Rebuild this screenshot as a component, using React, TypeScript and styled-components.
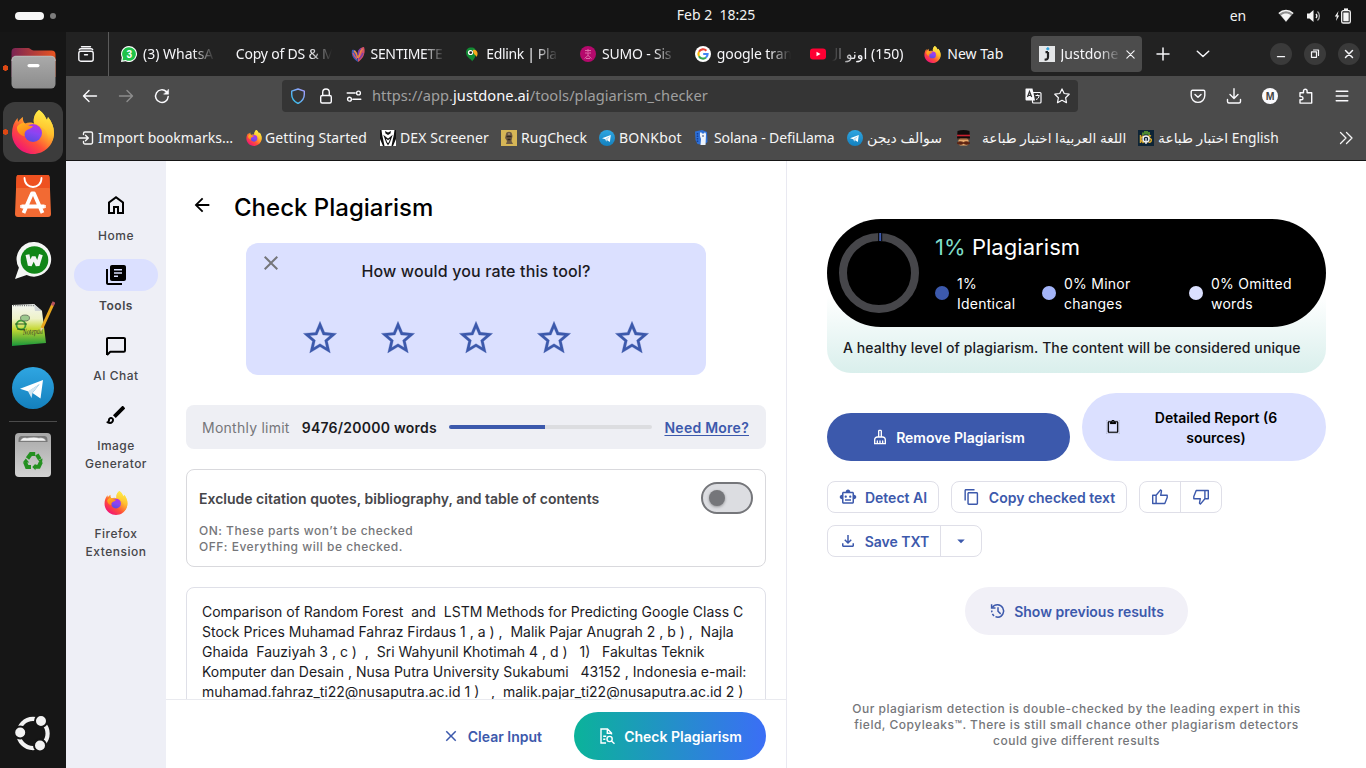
import React from "react";
import styled, { createGlobalStyle, css } from "styled-components";
import {
  MdArrowBack,
  MdArrowDropDown,
  MdClose,
  MdContentCopy,
  MdContentPaste,
  MdOutlineBrush,
  MdOutlineCleaningServices,
  MdOutlineFileDownload,
  MdOutlineSmartToy,
  MdStarOutline,
} from "react-icons/md";

const GlobalStyle = createGlobalStyle`
  *, *::before, *::after { box-sizing: border-box; }
  html, body { margin: 0; padding: 0; overflow: hidden; background: #141414; }
  svg { display: block; flex: none; }
`;

const uiFont = `"Noto Sans", "DejaVu Sans", sans-serif`;
const appFont = `Inter, "Liberation Sans", sans-serif`;

/* ---------- desktop shell ---------- */

const Desktop = styled.div`
  width: 1366px;
  height: 768px;
  display: flex;
  flex-direction: column;
  overflow: hidden;
  background: #151515;
  font-family: ${uiFont};
`;

const TopBar = styled.header`
  height: 32px;
  flex: none;
  display: grid;
  grid-template-columns: 1fr auto 1fr;
  align-items: center;
  background: #141414;
  color: #f2f2f2;
  font-size: 14px;
  line-height: 30px;
  white-space: pre;
`;

const Workspaces = styled.div`
  display: flex;
  align-items: center;
  gap: 6px;
  padding-left: 15px;
`;

const WorkspacePill = styled.span`
  width: 29px;
  height: 8px;
  border-radius: 4px;
  background: #f6f6f6;
`;

const WorkspaceDot = styled.span`
  width: 6px;
  height: 6px;
  border-radius: 50%;
  background: #7d7d7d;
`;

const Clock = styled.div`
  padding: 0 0 2px 66px;
  line-height: 28px;
`;

const Tray = styled.div`
  display: flex;
  align-items: center;
  justify-content: flex-end;
  padding-right: 15px;
`;

const Lang = styled.span`
  margin-right: 32px;
  letter-spacing: -0.2px;
  line-height: 32px;
`;

const TrayIcon = styled.span<{ $gap?: number }>`
  margin-left: ${(p) => p.$gap ?? 0}px;
`;

const Body = styled.div`
  flex: 1;
  min-height: 0;
  display: flex;
`;

const Dock = styled.nav`
  width: 66px;
  flex: none;
  display: flex;
  flex-direction: column;
  align-items: center;
  padding: 4px 0 3px;
  background: #161616;
`;

const DockSlot = styled.div<{ $running?: boolean }>`
  width: 66px;
  height: 64px;
  flex: none;
  display: flex;
  align-items: center;
  justify-content: center;
  ${(p) =>
    p.$running &&
    css`
      background: radial-gradient(circle 3px at 5.5px 32px, #dd4814 2.5px, transparent 3px);
    `}
`;

const DockTile = styled.div`
  width: 60px;
  height: 60px;
  display: flex;
  align-items: center;
  justify-content: center;
  border-radius: 12px;
  background: radial-gradient(circle 3px at 2.5px 30px, #dd4814 2.5px, transparent 3px), #3c3c3c;
`;

const DockDivider = styled.span`
  width: 48px;
  height: 1px;
  margin: 1px 0 1px;
  background: #4b4b4b;
`;

const DockSpacer = styled.span`
  flex: 1;
`;

/* ---------- browser ---------- */

const Browser = styled.section`
  flex: 1;
  min-width: 0;
  display: flex;
  flex-direction: column;
`;

const TabStrip = styled.div`
  height: 44px;
  flex: none;
  display: flex;
  align-items: center;
  background: #222222;
  color: #f6f6f9;
`;

const TabView = styled.div`
  width: 43px;
  height: 44px;
  flex: none;
  display: flex;
  align-items: center;
  justify-content: center;
  padding-right: 2px;
  border-right: 1px solid #5b5b5b;
`;

const Tab = styled.div<{ $active?: boolean }>`
  width: ${(p) => (p.$active ? 111 : 114.75)}px;
  height: 36px;
  flex: none;
  display: flex;
  align-items: center;
  gap: ${(p) => (p.$active ? 5.5 : 6)}px;
  padding-left: 8px;
  border-radius: 4px;
  ${(p) =>
    p.$active &&
    css`
      background: #4c4c4c;
    `}
`;

const TabList = styled.div`
  display: flex;
  padding-left: 4px;
  width: 1033px;
  flex: none;
`;

const TabTitle = styled.span<{ $w?: number; $rtl?: boolean; $whole?: boolean; $ls?: number }>`
  width: ${(p) => p.$w ?? 72}px;
  white-space: pre;
  font-size: 14px;
  line-height: 22px;
  letter-spacing: ${(p) => p.$ls ?? 0}px;
  direction: ${(p) => (p.$rtl ? "rtl" : "ltr")};
  ${(p) =>
    !p.$whole &&
    css`
      mask-image: linear-gradient(to ${p.$rtl ? "left" : "right"}, #000 calc(100% - 22px), transparent);
    `}
`;

const TabActions = styled.div`
  display: flex;
  align-items: center;
  padding-left: 13px;
  gap: 24px;
  margin-right: auto;
`;

const WindowButtons = styled.div`
  display: flex;
  align-items: center;
  gap: 12px;
  padding-right: 6px;
`;

const WindowButton = styled.span`
  width: 22px;
  height: 22px;
  display: flex;
  align-items: center;
  justify-content: center;
  border-radius: 50%;
  background: #3a3a3a;
`;

const NavBar = styled.div`
  height: 40px;
  flex: none;
  display: flex;
  align-items: center;
  justify-content: space-between;
  padding: 0 16px;
  background: #4b4b4b;
  color: #fbfbfe;
`;

const NavGroup = styled.div`
  display: flex;
  align-items: center;
  gap: 20px;
`;

const UrlBar = styled.div`
  width: 796px;
  height: 32px;
  display: flex;
  align-items: center;
  gap: 12px;
  padding: 0 8px;
  margin-left: 12px;
  margin-right: 12px;
  border-radius: 4px;
  background: #353535;
`;

const UrlText = styled.span`
  flex: 1;
  margin-left: -2px;
  padding-bottom: 2px;
  font-size: 14.67px;
  line-height: 28px;
  letter-spacing: 0.03px;
  color: #a0a0a0;
`;

const UrlHost = styled.span`
  color: #fbfbfe;
`;

const BookmarksBar = styled.div`
  height: 44px;
  flex: none;
  display: flex;
  align-items: center;
  padding-left: 12px;
  background: #4b4b4b;
  color: #f6f6f6;
`;

const Bookmark = styled.span<{ $w: number; $ls?: number; $gap?: number; $size?: number }>`
  width: ${(p) => p.$w}px;
  flex: none;
  display: flex;
  align-items: center;
  gap: ${(p) => p.$gap ?? 4}px;
  white-space: pre;
  font-size: ${(p) => p.$size ?? 14}px;
  line-height: 22px;
  letter-spacing: ${(p) => p.$ls ?? 0}px;
`;

const Page = styled.main`
  flex: 1;
  min-height: 0;
  display: flex;
  border-top: 1px solid #151515;
  background: #fff;
  font-family: ${appFont};
`;

/* ---------- app navigation ---------- */

const SideNav = styled.nav`
  width: 100px;
  flex: none;
  display: flex;
  flex-direction: column;
  align-items: center;
  gap: 14px;
  padding-top: 28px;
  background: #eeeff6;
`;

const NavItem = styled.div`
  display: flex;
  flex-direction: column;
  align-items: center;
  gap: 6px;
`;

const NavPill = styled.span<{ $active?: boolean }>`
  width: 84px;
  height: 32px;
  display: flex;
  align-items: center;
  justify-content: center;
  border-radius: 16px;
  color: #000;
  background: ${(p) => (p.$active ? "#dbe0ff" : "transparent")};
`;

const NavLabel = styled.span<{ $active?: boolean }>`
  font-size: 12px;
  font-weight: ${(p) => (p.$active ? 600 : 500)};
  line-height: 18px;
  letter-spacing: 0.5px;
  color: #46464a;
  text-align: center;
  white-space: pre-line;
`;

/* ---------- editor column ---------- */

const Editor = styled.section`
  width: 621px;
  flex: none;
  display: flex;
  flex-direction: column;
  border-right: 1px solid #e9e9f1;
`;

const EditorScroll = styled.div`
  height: 538px;
  flex: none;
  overflow: hidden;
  padding: 0 20px;
`;

const TitleRow = styled.div`
  height: 82px;
  display: flex;
  align-items: center;
  gap: 21px;
  padding: 12px 0 0 5px;
`;

const BackIcon = styled.span`
  padding-bottom: 6px;
  color: #000;
`;

const Title = styled.h1`
  margin: 0;
  font-size: 24px;
  font-weight: 500;
  line-height: 32px;
  color: #000;
`;

const RatingCard = styled.div`
  width: 460px;
  height: 132px;
  margin: 0 auto;
  padding: 8px 13px 0;
  border-radius: 12px;
  background: #dbe0ff;
  color: #1b1b1f;
`;

const RatingHead = styled.div`
  display: grid;
  grid-template-columns: 24px 1fr 24px;
  color: #75767a;
`;

const RatingTitle = styled.div`
  padding-top: 8px;
  text-align: center;
  font-size: 16px;
  font-weight: 500;
  line-height: 24px;
  letter-spacing: 0.14px;
  color: #1b1b1f;
`;

const Stars = styled.div`
  display: flex;
  justify-content: center;
  gap: 38px;
  margin-top: 35px;
  color: #3c59ac;

  svg {
    stroke-width: 0.15px;
  }
`;

const LimitBar = styled.div`
  height: 44px;
  margin-top: 30px;
  display: flex;
  align-items: center;
  gap: 12px;
  padding: 2px 17px 0 16px;
  border-radius: 8px;
  background: #eeeff4;
  font-size: 14px;
  line-height: 20px;
  letter-spacing: 0.25px;
`;

const LimitLabel = styled.span`
  color: #75767a;
`;

const LimitValue = styled.span`
  font-weight: 600;
  color: #1b1b1f;
`;

const Track = styled.span`
  flex: 1;
  height: 4px;
  margin-bottom: 2px;
  border-radius: 2px;
  overflow: hidden;
  background: linear-gradient(to right, #3c59ac 47.4%, #dcdde0 47.4%);
`;

const NeedMore = styled.a`
  font-weight: 600;
  color: #3c59ac;
  text-decoration: underline;
  text-underline-offset: 2px;
  text-decoration-skip-ink: none;
`;

const OptionCard = styled.div`
  height: 98px;
  margin-top: 20px;
  display: flex;
  justify-content: space-between;
  padding: 12px;
  border: 1px solid #d9d9dd;
  border-radius: 8px;
`;

const OptionText = styled.div`
  padding-top: 7px;
`;

const OptionTitle = styled.div`
  font-size: 14px;
  font-weight: 600;
  line-height: 20px;
  color: #46464a;
`;

const OptionHint = styled.div`
  margin-top: 14px;
  font-size: 12px;
  font-weight: 500;
  line-height: 16px;
  letter-spacing: 0.5px;
  color: #75767a;
`;

const Switch = styled.span`
  width: 52px;
  height: 32px;
  display: flex;
  align-items: center;
  padding-left: 6px;
  border: 2px solid #75767a;
  border-radius: 16px;
  background: #dcdde1;
`;

const SwitchKnob = styled.span`
  width: 16px;
  height: 16px;
  border-radius: 50%;
  background: #75767a;
  box-shadow: 0 1px 3px rgba(0, 0, 0, 0.35);
`;

const TextCard = styled.div`
  height: 200px;
  margin-top: 20px;
  padding: 14px 15px;
  border: 1px solid #dfe0e8;
  border-radius: 8px;
  font-size: 14px;
  line-height: 20px;
  color: #1b1b1f;
  white-space: pre;
`;

const EditorFooter = styled.div`
  flex: 1;
  display: flex;
  align-items: center;
  justify-content: flex-end;
  gap: 32px;
  padding: 4px 20px 0 0;
  border-top: 1px solid #e9eaef;
`;

const TextButton = styled.button`
  display: flex;
  align-items: center;
  gap: 8px;
  padding: 0;
  border: 0;
  background: none;
  font: 600 14px/20px ${appFont};
  color: #3c59ac;
`;

const pill = css`
  display: flex;
  align-items: center;
  justify-content: center;
  border: 0;
  border-radius: 34px;
  font: 600 14px/20px ${appFont};
`;

const GradientButton = styled.button`
  ${pill}
  width: 192px;
  height: 48px;
  gap: 8px;
  padding: 0;
  color: #fff;
  background: linear-gradient(to right, #0bb39a, #3b6ef6);
`;

/* ---------- results column ---------- */

const Results = styled.section`
  flex: 1;
  min-width: 0;
  padding: 58px 40px 0;
`;

const ScoreCard = styled.div`
  height: 154px;
  border-radius: 54px 54px 24px 24px;
  background: linear-gradient(to bottom, #ffffff 50%, #d9efec 100%);
`;

const ScoreTop = styled.div`
  height: 108px;
  display: flex;
  gap: 16px;
  padding: 14px 12px 0;
  border-radius: 54px;
  background: #000;
  color: #fff;
`;

const ScoreTitle = styled.div`
  font-size: 22px;
  font-weight: 400;
  line-height: 28px;
  letter-spacing: 0.05px;
`;

const ScoreValue = styled.span`
  color: #7fdcc8;
`;

const Legend = styled.div`
  display: grid;
  grid-template-columns: 107px 147px 120px;
  padding-top: 13px;
`;

const LegendItem = styled.div<{ $color: string }>`
  display: flex;
  align-items: center;
  gap: 8px;
  font-size: 14px;
  line-height: 20px;
  letter-spacing: 0.25px;
  white-space: pre-line;

  &::before {
    content: "";
    width: 14px;
    height: 14px;
    margin-bottom: 2px;
    flex: none;
    border-radius: 50%;
    background: ${(p) => p.$color};
  }
`;

const ScoreNote = styled.div`
  padding: 11px 16px 0;
  font-size: 14px;
  font-weight: 500;
  line-height: 20px;
  letter-spacing: 0.09px;
  color: #1b1b1f;
`;

const ActionRow = styled.div`
  display: flex;
  align-items: flex-end;
  gap: 12px;
  margin-top: 20px;
`;

const PrimaryButton = styled.button`
  ${pill}
  width: 243px;
  height: 48px;
  gap: 8px;
  padding: 0;
  background: #3c59ac;
  color: #fff;
`;

const ReportButton = styled.button`
  ${pill}
  flex: 1;
  height: 68px;
  padding: 0 24px 0 24px;
  background: #dbe0ff;
  color: #000;

  svg {
    stroke-width: 0.25px;
  }
`;

const ReportLabel = styled.span`
  flex: 1;
  padding: 2px 10px 0 20px;
  white-space: pre-line;
`;

const Chips = styled.div`
  display: flex;
  flex-wrap: wrap;
  gap: 12px;
  margin-top: 20px;
`;

const ChipGroup = styled.div`
  height: 32px;
  display: flex;
  border: 1px solid #dfdfe8;
  border-radius: 8px;
`;

const Chip = styled.button<{ $w: number }>`
  width: ${(p) => p.$w}px;
  display: flex;
  align-items: center;
  justify-content: center;
  gap: 8px;
  padding: 0;
  border: 0;
  background: none;
  font: 600 14px/20px ${appFont};
  white-space: nowrap;
  color: #3c59ac;

  & + & {
    border-left: 1px solid #dfdfe8;
  }
`;

const HistoryButton = styled.button`
  ${pill}
  width: 223px;
  height: 48px;
  gap: 7px;
  margin: 30px auto 0;
  padding: 0;
  background: #f1f0f7;
  color: #3c59ac;
`;

const Disclaimer = styled.p`
  width: 470px;
  margin: 66px auto 0;
  text-align: center;
  font-size: 12px;
  font-weight: 500;
  line-height: 16px;
  letter-spacing: 0.5px;
  color: #75767a;
`;

const ButtonText = styled.span`
  padding-top: 2px;
`;

/* ---------- drawings ---------- */

type StrokeProps = { size?: number; w?: number; color?: string; children: React.ReactNode };

const Line = ({ size = 16, w = 1.3, color = "currentColor", children }: StrokeProps) => (
  <svg width={size} height={size} viewBox="0 0 16 16" fill="none" stroke={color} strokeWidth={w} strokeLinecap="round" strokeLinejoin="round">
    {children}
  </svg>
);

const Firefox = ({ size, id }: { size: number; id: string }) => (
  <svg width={size} height={size} viewBox="0 0 42 44">
    <defs>
      <linearGradient id={`${id}a`} x1="0.85" y1="0.1" x2="0.2" y2="0.95">
        <stop offset="0" stopColor="#fff34a" />
        <stop offset="0.35" stopColor="#ffb02a" />
        <stop offset="0.65" stopColor="#ff5038" />
        <stop offset="1" stopColor="#f0107a" />
      </linearGradient>
      <linearGradient id={`${id}b`} x1="0.7" y1="0" x2="0.4" y2="1">
        <stop offset="0" stopColor="#b833e1" />
        <stop offset="0.5" stopColor="#8a45f2" />
        <stop offset="1" stopColor="#5a4be0" />
      </linearGradient>
      <linearGradient id={`${id}c`} x1="0" y1="0" x2="0.6" y2="1">
        <stop offset="0" stopColor="#ffb820" />
        <stop offset="1" stopColor="#ff7a1a" />
      </linearGradient>
      <linearGradient id={`${id}d`} x1="0.6" y1="0" x2="0.5" y2="1">
        <stop offset="0" stopColor="#fff04a" />
        <stop offset="0.6" stopColor="#ffc02c" />
        <stop offset="1" stopColor="#ff6a30" />
      </linearGradient>
    </defs>
    <path
      d="M27 0c5 3 6 7 8 10l1-3c4 5 6 10 6 16 0 12-9.400 21-21 21S0 34.500 0 23.500C0 17 2 12 5.500 8l.5 4C7.500 9.500 9.500 8 11 7c-.5 3 .5 5 2 6.500 3-1.500 7-1.500 9 0C21 8 23 3 27 0z"
      fill={`url(#${id}a)`}
    />
    <path d="M27 0c5 3 6 7 8 10l1-3c4 5 6 10 6 16 0 7-4 13-9 15 4-6 4-12 1-17-3-4-9-6-12-8C21 8 23 3 27 0z" fill={`url(#${id}d)`} opacity="0.85" />
    <circle cx="21" cy="23" r="9" fill={`url(#${id}b)`} />
    <path d="M5 17c3-4 6-4.500 8-3.500 2 2 5 2.500 8 2.500-1 2.500-4 3-6 4-2.500 1.500-3 4-2 6.500-5-1-8.500-5-8-9.500z" fill={`url(#${id}c)`} />
  </svg>
);

const Telegram = ({ size, id }: { size: number; id: string }) => (
  <svg width={size} height={size} viewBox="0 0 42 42">
    <defs>
      <linearGradient id={id} x1="0" y1="0" x2="0" y2="1">
        <stop offset="0" stopColor="#2fa6e2" />
        <stop offset="1" stopColor="#1480bd" />
      </linearGradient>
    </defs>
    <circle cx="21" cy="21" r="21" fill={`url(#${id})`} />
    <path d="M8 21.800 31 13l-2.500 18.600-8-5.500 7.200-9.200-11.200 7.600z" fill="#fff" />
    <path d="m16 24.200 11.700-7.300-7.200 9.100-1 5z" fill="#d3e6f2" />
  </svg>
);

const FolderIcon = () => (
  <svg width="45" height="42" viewBox="0 0 45 42">
    <defs>
      <linearGradient id="fold" x1="0" y1="0" x2="1" y2="0">
        <stop offset="0" stopColor="#7a2454" />
        <stop offset="1" stopColor="#e95420" />
      </linearGradient>
      <linearGradient id="front" x1="0" y1="0" x2="0" y2="1">
        <stop offset="0" stopColor="#aaaaaa" />
        <stop offset="1" stopColor="#8c8c8c" />
      </linearGradient>
    </defs>
    <path d="M.5 5a4 4 0 0 1 4-4h13c2 0 2.500 2.500 5 2.500h18a4 4 0 0 1 4 4V30H.5z" fill="url(#fold)" />
    <rect x=".5" y="9" width="44" height="32.500" rx="4.500" fill="url(#front)" />
    <path d="M1 14c0-4 2-4.800 4-4.800h35c3 0 4.300 2 4.300 4.800" stroke="#c6c6c6" strokeWidth=".7" fill="none" />
    <rect x="16.500" y="17" width="12" height="3.200" rx="1.600" fill="#fff" />
  </svg>
);

const SoftwareIcon = () => (
  <svg width="36" height="42" viewBox="0 0 36 42">
    <path d="M3.500 0h29a2 2 0 0 1 2 2L36 39a3 3 0 0 1-3 3H3a3 3 0 0 1-3-3L1.500 2a2 2 0 0 1 2-2z" fill="#f26a33" />
    <path d="M3.500 0h29a2 2 0 0 1 2 2l.5 11H1L1.500 2a2 2 0 0 1 2-2z" fill="#ee5120" />
    <path d="M9.500 3c0 12 17 12 17 0" stroke="#fff" strokeWidth="1.800" fill="none" strokeLinecap="round" />
    <path d="M8.500 38 17 18.500h2L27.500 38M6.500 31.500h23" stroke="#fff" strokeWidth="3.800" fill="none" strokeLinejoin="round" />
    <path d="M6 30v3M30 30v3" stroke="#fff" strokeWidth="1.500" />
  </svg>
);

const WhatsAppIcon = () => (
  <svg width="37" height="37" viewBox="0 0 38 38">
    <path d="M20 0a17.800 17.800 0 1 1-8 34L0 38l4-11.500A17.800 17.800 0 0 1 20 0z" fill="#f4f6f4" />
    <circle cx="20" cy="18.500" r="14.200" fill="#118617" />
    <path d="m12.800 13 2.400 11 4-8.500 4 8.500 3.400-11" fill="none" stroke="#f4f6f4" strokeWidth="4" strokeLinejoin="bevel" />
  </svg>
);

const NotepadIcon = () => (
  <svg width="44" height="46" viewBox="0 0 44 46">
    <defs>
      <linearGradient id="note" x1="0" y1="0" x2="0" y2="1">
        <stop offset="0" stopColor="#f4f6f4" />
        <stop offset=".35" stopColor="#eef2c8" />
        <stop offset=".6" stopColor="#c5d832" />
        <stop offset="1" stopColor="#17963a" />
      </linearGradient>
    </defs>
    <path d="m1 4 22-1 8 7 4 32L1 45z" fill="url(#note)" />
    <path d="m23 3 1 7 7 0z" fill="#cfd4d4" />
    <path d="M2 4.500h21" stroke="#6d7270" strokeWidth="1.500" strokeDasharray="1 1.200" />
    <circle cx="10" cy="24" r="4.500" fill="none" stroke="#3d9b35" strokeWidth="1.800" />
    <ellipse cx="14" cy="17" rx="4.500" ry="3" fill="#9cc98e" stroke="#51594c" strokeWidth=".7" />
    <path d="M4 23h12M6 28l8 1" stroke="#2a5a20" strokeWidth="1" />
    <text x="12" y="34" fontFamily="Liberation Serif" fontStyle="italic" fontSize="9" textLength="20" lengthAdjust="spacingAndGlyphs" fill="#3b3d2b" transform="rotate(-4 12 34)">
      Notepad
    </text>
    <path d="M31 27 42 3" stroke="#e8a81e" strokeWidth="3" />
    <path d="m41.300 4.500 1.700-3.500" stroke="#b5525c" strokeWidth="3" />
    <path d="m32.300 27.500-2.600-1-.2 4z" fill="#e9d2a8" />
  </svg>
);

const TrashIcon = () => (
  <svg width="38" height="44" viewBox="0 0 38 44">
    <defs>
      <linearGradient id="bin" x1="0" y1="0" x2="0" y2="1">
        <stop offset="0" stopColor="#a8a8a8" />
        <stop offset="1" stopColor="#d2d2d2" />
      </linearGradient>
    </defs>
    <rect x="1" y="0" width="36" height="44" rx="4" fill="url(#bin)" />
    <path d="M4.500 8c0-4 1-5 4-5h21c3 0 4 1 4 5v1h-29z" fill="#777" />
    <path d="M6 8c2-3 3-4 7-3 4-1 9-1 12 0 3-.5 6 0 7 3z" fill="#f2f2f2" stroke="#888" strokeWidth=".5" />
    <g fill="none" stroke="#249021" strokeWidth="4">
      <path d="m13.500 25.500 3.300-4.500h4.400" />
      <path d="m22.800 21.500 3 4.800" />
      <path d="m27 28.800-2.300 5h-4.200" />
      <path d="M17 34h-4l-2-5" />
    </g>
    <path d="m24 27.500 4.500-2-.5 4.500zM21.500 30.800v6.400l-3.300-3.200zM8.800 29.500l3-4 3.400 4z" fill="#249021" />
  </svg>
);

const UbuntuIcon = () => (
  <svg width="36" height="36" viewBox="0 0 36 36" fill="none">
    <circle cx="18" cy="18.500" r="14.600" stroke="#f2f2f2" strokeWidth="4.200" />
    <g fill="#f2f2f2" stroke="#151515" strokeWidth="2">
      <circle cx="5.200" cy="17.500" r="6" />
      <circle cx="26" cy="6" r="6" />
      <circle cx="25" cy="30.500" r="6" />
    </g>
  </svg>
);

const HomeIcon = () => (
  <svg width="24" height="24" viewBox="0 -960 960 960" fill="currentColor">
    <path d="M240-200h120v-240h240v240h120v-360L480-740 240-560v360Zm-80 80v-480l320-240 320 240v480H520v-240h-80v240H160Z" />
  </svg>
);

const LibraryIcon = () => (
  <svg width="24" height="24" viewBox="0 0 24 24" fill="currentColor">
    <path d="M4 6H2v14c0 1.100.9 2 2 2h14v-2H4z" />
    <path
      fillRule="evenodd"
      d="M20 2H8c-1.100 0-2 .9-2 2v12c0 1.100.9 2 2 2h12c1.100 0 2-.9 2-2V4c0-1.100-.9-2-2-2zm-2 5.500h-8V6h8zm0 3.300h-8V9.200h8zm-4 3.200h-4v-1.500h4z"
    />
  </svg>
);

const ChatIcon = () => (
  <svg width="24" height="24" viewBox="0 -1.700 24 24" fill="none" stroke="currentColor" strokeWidth="2">
    <path d="M3 20.200V4.500A1.200 1.200 0 0 1 4.200 3.200h15.600A1.200 1.200 0 0 1 21 4.500v11.300a1.200 1.200 0 0 1-1.200 1.200H6.300L3 20.300" strokeLinejoin="round" />
  </svg>
);

const ThumbIcon = ({ down }: { down?: boolean }) => (
  <svg width="18" height="18" viewBox="0 0 18 18" fill="none" stroke="currentColor" strokeWidth="1.400" strokeLinejoin="round">
    <g transform={down ? "rotate(180 9 9)" : undefined}>
      <path d="M1.700 7.300h3.400v8.200H1.700zM5.100 7.300 9.600 1.900l.9.900-.8 4.500h6.500v2.300l-2.400 5.900H5.100" />
    </g>
  </svg>
);

const DocSearchIcon = () => (
  <svg width="18" height="18" viewBox="0 0 18 18" fill="none" stroke="currentColor" strokeWidth="1.400">
    <path d="M8 16H3V2h6.500l4 4v1.500M9.300 2v4.200h4.200M5.200 9.300h3M5.200 12.300h2.200" />
    <circle cx="11.600" cy="12" r="2.600" />
    <path d="m13.500 13.900 3 2.800" />
  </svg>
);

const HistoryIcon = () => (
  <svg width="18" height="18" viewBox="0 0 18 18" fill="none" stroke="currentColor" strokeWidth="1.500">
    <path d="M3.300 5.500A6.200 6.200 0 1 1 9 15.200" />
    <path d="M9 15.200A6.200 6.200 0 0 1 2.800 8.500" strokeDasharray="2.600 1.600" />
    <path d="M2.600 2.200v3.900h3.900M9 5.300v4l2.700 2.600" />
  </svg>
);

const Donut = () => (
  <svg width="80" height="80" viewBox="0 0 80 80" fill="none" strokeWidth="8">
    <circle cx="40" cy="40" r="36" stroke="#46464a" />
    <path d="M39.200 4h4" stroke="#000" />
    <path d="M40.200 4h2" stroke="#3c59ac" />
  </svg>
);

const WhatsAppTab = () => (
  <svg width="16" height="16" viewBox="0 0 16 16">
    <path d="M8 0a8 8 0 1 1-3.500 15.200L0 16l.8-4.500A8 8 0 0 1 8 0z" fill="#fff" />
    <path d="M8 1.200a6.800 6.800 0 1 1-3.300 12.700l-3.200.6.600-3A6.800 6.800 0 0 1 8 1.200z" fill="#1fc24a" />
    <text x="8.300" y="11.600" fontSize="10" fontWeight="700" fontFamily="Liberation Sans" textAnchor="middle" fill="#fff">
      3
    </text>
  </svg>
);

const HeartTab = () => (
  <svg width="14" height="16" viewBox="0 0 14 16">
    <path d="M1 4c2-1 4 0 5 3l1 9C2 13 0 9 1 4z" fill="#3f5bb5" />
    <path d="M13 1c-2 0-5 1.500-6 5v10c5-3 8-9 6-15z" fill="#d3526a" />
    <path d="M3 5c2 1 3 3 3.500 7M11.500 3C9 5 8.500 8 8 12" stroke="#f08a3c" strokeWidth="1.500" fill="none" />
    <path d="M10 2.500C8 4 7 6 7 9M12 7c-1 3-2 4-4 6" stroke="#7a3fa8" strokeWidth="1.500" fill="none" />
    <path d="M2 7c1 3 2 4 4 6" stroke="#e05575" strokeWidth="1.200" fill="none" />
  </svg>
);

const EdlinkTab = () => (
  <svg width="15" height="16" viewBox="0 0 15 16">
    <path d="M6 1.500c4 0 5 2 5 5C11 11 9 13 7 15.500 7 13 1 12 1 6.500c0-3 2-5 5-5z" fill="#118a34" />
    <path d="M8 4c4-1 6 4 3.500 7C11.500 9 8 9 8 4z" fill="#f7a81c" />
    <circle cx="5.500" cy="6.500" r="2.600" fill="#fff" />
    <circle cx="5.700" cy="6.600" r="1.400" fill="#222" />
  </svg>
);

const SumoTab = () => (
  <svg width="16" height="16" viewBox="0 0 16 16">
    <circle cx="8" cy="8" r="8" fill="#b5096c" />
    <path d="M8 3v3M5 4.500h6M5 7h6M8 7v3M4.500 12.500 8 9.500l3.500 3M6 12.500h4" stroke="#dd6ba8" strokeWidth="1" fill="none" />
  </svg>
);

const GoogleTab = () => (
  <svg width="16" height="16" viewBox="0 0 16 16" fill="none" strokeWidth="2.100">
    <circle cx="8" cy="8" r="8" fill="#fff" />
    <path d="M11.400 4.700A4.600 4.600 0 0 0 4 5.800" stroke="#ea4335" />
    <path d="M4 5.800a4.600 4.600 0 0 0 0 4.400" stroke="#fbbc05" />
    <path d="M4 10.200a4.600 4.600 0 0 0 7 1.300" stroke="#34a853" />
    <path d="M11 11.500A4.600 4.600 0 0 0 12.600 8H8.200" stroke="#4285f4" />
  </svg>
);

const YoutubeTab = () => (
  <svg width="16" height="16" viewBox="0 0 16 16">
    <rect x="0" y="2.500" width="16" height="11" rx="3" fill="#ff0033" />
    <path d="m6.500 5.700 4 2.300-4 2.300z" fill="#fff" />
  </svg>
);

const JustdoneTab = () => (
  <svg width="16" height="16" viewBox="0 0 16 16">
    <rect width="16" height="16" fill="#e4e6e8" />
    <path d="M9 6v5c0 2-1 2.700-3.400 2.500M6.500 6.200H9" stroke="#222" strokeWidth="2.200" fill="none" />
    <path d="M8.800 1.300v3M7.300 2.800h3" stroke="#35a4dc" strokeWidth="1.700" />
  </svg>
);

const DexIcon = () => (
  <svg width="16" height="16" viewBox="0 0 16 16">
    <rect width="16" height="16" fill="#fff" />
    <path d="M0 0h1.500l.7 5 1.300 6 1 5H3L0 9zM16 0h-1.500l-.7 5-1.300 6-1 5H13l3-7zM5 1l3 1.500L11 1l-.5 2.500L8 5 5.500 3.500z" fill="#111" />
    <path d="m4.500 6.500 3.500 3 3.500-3L9.500 12 8 14.500 6.500 12z" stroke="#111" strokeWidth="1.100" fill="none" />
  </svg>
);

const RugIcon = () => (
  <svg width="16" height="16" viewBox="0 0 16 16">
    <rect width="16" height="16" fill="#d6b656" />
    <path d="M5 4c0-3 6-3 6 0l.5 2-1 5 1.500 3H5l1-3-2-3z" fill="#6d5a44" />
    <path d="M5.500 6.500h5M6.500 9.500h3" stroke="#2e2620" strokeWidth="1.400" />
    <path d="M7 4h2" stroke="#b9a894" />
  </svg>
);

const LlamaIcon = () => (
  <svg width="16" height="16" viewBox="0 0 16 16">
    <path d="M0 1.500 7 0l5 2 .5 10-4 3-6-1-2-4z" fill="#2d6fd6" />
    <path d="M5 3l1-1 1 1.500h2L10 2l1 2-.5 11h-5l.5-6-1-3z" fill="#eef4fb" />
    <circle cx="8" cy="6" r=".8" fill="#1c2f66" />
    <path d="M2.500 3v10" stroke="#123f9c" strokeWidth="1.500" strokeDasharray="1.500 1" />
  </svg>
);

const AgentIcon = () => (
  <svg width="16" height="16" viewBox="0 0 16 16">
    <path d="M1.500 1C5-.3 10-.3 13.500 1l.5 7.500H1z" fill="#120c0c" />
    <path d="M1 4.700h13v1.600H1z" fill="#c8202f" />
    <rect x="2.500" y="8.500" width="10" height="7" rx="2" fill="#e7a96b" />
    <path d="M1 9h13M1 13c3-2 4-1.500 6.500-.5 2-1 3-1.500 6.500.5-2 2-4 1.500-6.500.5-2 1-4.500 1.500-6.500-.5z" stroke="#5d2413" fill="#5d2413" strokeWidth=".8" />
  </svg>
);

const KeyIcon = () => (
  <svg width="16" height="16" viewBox="0 0 16 16">
    <rect width="16" height="16" fill="#0d2436" />
    <path d="M5 5V2.500M7 4.500V1M9 4.500V1M11 5V2" stroke="#6bb52e" strokeWidth="1.400" />
    <path d="M2.500 5v8M2.500 9l3-3.500M2.500 9l3 4M13 6c-3-1.500-3 2-.5 2.800C14 9.500 13.500 13 10.500 12" stroke="#d8a92c" strokeWidth="1.500" fill="none" />
    <circle cx="8" cy="9" r="3" fill="none" stroke="#f3f3f3" strokeWidth="1.400" />
    <path d="M8 8v6" stroke="#f3f3f3" strokeWidth="1.300" />
  </svg>
);

/* ---------- sections ---------- */

const StatusBar = () => (
  <TopBar>
    <Workspaces>
      <WorkspacePill />
      <WorkspaceDot />
    </Workspaces>
    <Clock>{"Feb 2  18:25"}</Clock>
    <Tray>
      <Lang>en</Lang>
      <TrayIcon>
        <svg width="16" height="16" viewBox="0 0 16 16" fill="none">
          <path d="M.8 5.500C5 1.500 11 1.500 15.200 5.500L8 14z" fill="#8f8f8f" />
          <path d="M.8 5.500C5 1.500 11 1.500 15.200 5.500" stroke="#f4f4f4" strokeWidth="1.300" />
          <path d="M3 7.300c3-2.300 7-2.300 10 0L8 13.500z" fill="#f4f4f4" />
        </svg>
      </TrayIcon>
      <TrayIcon $gap={12}>
        <svg width="16" height="16" viewBox="0 0 16 16" fill="none">
          <path d="M1 5.500h2.500L7.500 2v12l-4-3.500H1z" fill="#f4f4f4" />
          <path d="M10 6a3 3 0 0 1 0 4" stroke="#f4f4f4" strokeWidth="1.300" />
          <path d="M11.500 3.500c2.500 2 2.500 7 0 9" stroke="#aaa" strokeWidth="1.300" />
        </svg>
      </TrayIcon>
      <TrayIcon $gap={12}>
        <svg width="17" height="16" viewBox="0 0 17 16" fill="none">
          <path d="M4.500 3 .8 8.500h2L2 13l3.200-5.500H3.500z" fill="#f4f4f4" />
          <rect x="7.700" y="2.700" width="8.600" height="12.300" rx="1.600" stroke="#f4f4f4" strokeWidth="1.300" />
          <rect x="9.300" y="4.500" width="5.400" height="8.800" fill="#f4f4f4" />
          <path d="M10 1.200h4" stroke="#f4f4f4" strokeWidth="1.600" />
        </svg>
      </TrayIcon>
    </Tray>
  </TopBar>
);

const AppDock = () => (
  <Dock>
    <DockSlot $running>
      <FolderIcon />
    </DockSlot>
    <DockSlot>
      <DockTile>
        <Firefox size={44} id="dockfx" />
      </DockTile>
    </DockSlot>
    <DockSlot>
      <SoftwareIcon />
    </DockSlot>
    <DockSlot>
      <WhatsAppIcon />
    </DockSlot>
    <DockSlot>
      <NotepadIcon />
    </DockSlot>
    <DockSlot>
      <Telegram size={42} id="docktg" />
    </DockSlot>
    <DockDivider />
    <DockSlot>
      <TrashIcon />
    </DockSlot>
    <DockSpacer />
    <DockSlot>
      <UbuntuIcon />
    </DockSlot>
  </Dock>
);

const Tabs = () => (
  <TabStrip>
    <TabView>
      <Line size={16} w={1.4}>
        <path d="M3.500 .8h9M1.300 3.800c.2-.7.700-1 1.400-1h10.600c.7 0 1.200.3 1.400 1" />
        <rect x=".8" y="5.200" width="14.400" height="10" rx="2" />
        <path d="M6.500 8.800h3" />
      </Line>
    </TabView>
    <TabList>
      <Tab>
        <WhatsAppTab />
        <TabTitle>(3) WhatsA</TabTitle>
      </Tab>
      <Tab>
        <TabTitle $w={96} $ls={-0.2}>
          {"Copy of DS & M"}
        </TabTitle>
      </Tab>
      <Tab>
        <HeartTab />
        <TabTitle $w={74} $ls={-0.3}>SENTIMETE</TabTitle>
      </Tab>
      <Tab>
        <EdlinkTab />
        <TabTitle $ls={-0.35}>Edlink | Pla</TabTitle>
      </Tab>
      <Tab>
        <SumoTab />
        <TabTitle $w={74} $ls={-0.2}>SUMO - Sis</TabTitle>
      </Tab>
      <Tab>
        <GoogleTab />
        <TabTitle $w={74} $ls={-0.1}>google tran</TabTitle>
      </Tab>
      <Tab>
        <YoutubeTab />
        <TabTitle $rtl>(150) اونو ال</TabTitle>
      </Tab>
      <Tab>
        <Firefox size={17} id="tabfx" />
        <TabTitle $whole>New Tab</TabTitle>
      </Tab>
      <Tab $active>
        <JustdoneTab />
        <TabTitle $w={60}>Justdone</TabTitle>
        <Line size={9} w={2}>
          <path d="m1.500 1.500 13 13M14.500 1.500l-13 13" />
        </Line>
      </Tab>
    </TabList>
    <TabActions>
      <Line w={1.5}>
        <path d="M8 2v12M2 8h12" />
      </Line>
      <Line w={1.5}>
        <path d="m2.300 5.300 5.700 5.200 5.700-5.200" />
      </Line>
    </TabActions>
    <WindowButtons>
      <WindowButton>
        <Line w={1.3}>
          <path d="M4.500 10.700h7" />
        </Line>
      </WindowButton>
      <WindowButton>
        <Line w={1.2}>
          <path d="M4.500 5.800h5v5.500h-5zM6.500 4h5v5.500" />
        </Line>
      </WindowButton>
      <WindowButton>
        <Line w={1.5}>
          <path d="m4.500 4.500 7 7M11.500 4.500l-7 7" />
        </Line>
      </WindowButton>
    </WindowButtons>
  </TabStrip>
);

const AddressBar = () => (
  <NavBar>
    <NavGroup>
      <Line w={1.4}>
        <path d="M14.500 8h-13M7 2.500 1.500 8 7 13.500" />
      </Line>
      <Line w={1.4} color="#8d8d8d">
        <path d="M1.500 8h13M9 2.500 14.500 8 9 13.500" />
      </Line>
      <Line w={1.5}>
        <path d="M14.200 8.500A6.300 6.300 0 1 1 12.300 3.600" />
        <path d="M14.600 1.500v4.700H9.900z" fill="currentColor" strokeWidth=".5" />
      </Line>
    </NavGroup>
    <UrlBar>
      <svg width="16" height="16" viewBox="0 0 16 16" fill="none">
        <defs>
          <linearGradient id="shield" x1="0" y1="1" x2="1" y2="0">
            <stop offset="0" stopColor="#2ac3e8" />
            <stop offset="1" stopColor="#a99bff" />
          </linearGradient>
        </defs>
        <path d="M8 1 14.300 3.200v3.300c0 4-2.300 7-6.300 9-4-2-6.300-5-6.300-9V3.200z" stroke="url(#shield)" strokeWidth="1.400" strokeLinejoin="round" />
      </svg>
      <Line w={1.4}>
        <rect x="2.700" y="7.500" width="10.600" height="7.500" rx="1.500" />
        <path d="M4.700 7.500V4.300a3.300 3.300 0 0 1 6.600 0v3.200" />
      </Line>
      <Line w={1.4}>
        <path d="M1.200 5h8M6.800 11.200h8" />
        <circle cx="12.500" cy="5" r="1.900" />
        <circle cx="3.500" cy="11.200" r="1.900" />
      </Line>
      <UrlText>
        https://app.<UrlHost>justdone.ai</UrlHost>/tools/plagiarism_checker
      </UrlText>
      <svg width="17" height="16" viewBox="0 0 17 16" fill="none">
        <rect x="7.500" y="4.500" width="8.500" height="10.500" rx="1" stroke="#fbfbfe" strokeWidth="1.200" />
        <path d="M1 .5h6.500l2.500 12H1.500a1 1 0 0 1-1-1V1a.5.500 0 0 1 .5-.5z" fill="#fbfbfe" />
        <path d="m2.500 9 2-5.500L6.700 9M3.200 7.300h2.800" stroke="#353535" strokeWidth="1.200" />
        <path d="M10.500 7.500h4M12.500 6.500v1M11 11.500c2-.5 3-2 3-4" stroke="#fbfbfe" strokeWidth="1" />
      </svg>
      <Line w={1.2}>
        <path d="m8 .9 2.200 4.600 5 .7-3.600 3.500.9 5L8 12.300l-4.500 2.400.9-5L.8 6.200l5-.7z" />
      </Line>
    </UrlBar>
    <NavGroup>
      <Line w={1.4}>
        <path d="M2.500 2.300h11a1.300 1.300 0 0 1 1.300 1.300v4a6.800 6.800 0 0 1-13.600 0v-4a1.300 1.300 0 0 1 1.300-1.300zM5 6.500l3 2.800 3-2.800" />
      </Line>
      <Line w={1.4}>
        <path d="M8 .8v9.500M4 6.500l4 4 4-4M1.500 11.500v2a1.500 1.500 0 0 0 1.500 1.500h10a1.500 1.500 0 0 0 1.500-1.500v-2" />
      </Line>
      <svg width="16" height="16" viewBox="0 0 16 16">
        <circle cx="8" cy="8" r="8" fill="#fbfbfe" />
        <text x="8" y="11.700" fontSize="10.500" fontWeight="700" fontFamily="Liberation Sans" textAnchor="middle" fill="#444">
          M
        </text>
      </svg>
      <Line w={1.4}>
        <path d="M5.500 4.800v-1.700a1.800 1.800 0 0 1 3.600 0v1.700h4.600v10.300H2v-3.300h1.400a1.600 1.600 0 0 0 0-3.200H2V4.800z" />
      </Line>
      <Line w={1.4}>
        <path d="M2.200 3.200h11.600M2.200 8h11.600M2.200 12.800h11.600" />
      </Line>
    </NavGroup>
  </NavBar>
);

const Bookmarks = () => (
  <BookmarksBar>
    <Bookmark $w={168} $ls={0.04}>
      <Line w={1.4}>
        <path d="M5.500 4.500v-1A1.500 1.500 0 0 1 7 2h6a1.500 1.500 0 0 1 1.500 1.500v9A1.500 1.500 0 0 1 13 14H7a1.500 1.500 0 0 1-1.500-1.500v-1M1 8h9M7.500 5.200 10.300 8l-2.800 2.800" />
      </Line>
      Import bookmarks…
    </Bookmark>
    <Bookmark $w={134} $ls={0.09} $gap={3}>
      <Firefox size={16} id="bmfx" />
      Getting Started
    </Bookmark>
    <Bookmark $w={121} $ls={0.09}>
      <DexIcon />
      DEX Screener
    </Bookmark>
    <Bookmark $w={98} $ls={0.06}>
      <RugIcon />
      RugCheck
    </Bookmark>
    <Bookmark $w={96} $ls={0.2}>
      <Telegram size={16} id="bmtg1" />
      BONKbot
    </Bookmark>
    <Bookmark $w={152} $ls={-0.09} $gap={3}>
      <LlamaIcon />
      Solana - DefiLlama
    </Bookmark>
    <Bookmark $w={109}>
      <Telegram size={16} id="bmtg2" />
      <span dir="rtl">سوالف ديجن</span>
    </Bookmark>
    <Bookmark $w={182} $gap={10} $size={13.7}>
      <AgentIcon />
      <span dir="rtl">اللغة العربيةا اختبار طباعة</span>
    </Bookmark>
    <Bookmark $w={200} $size={13.8}>
      <KeyIcon />
      <span dir="rtl">English اختبار طباعة</span>
    </Bookmark>
    <Line w={1.3}>
      <path d="m2.500 2.500 5.500 5.500-5.500 5.500M8.500 2.500 14 8l-5.500 5.500" />
    </Line>
  </BookmarksBar>
);

const navItems = [
  { label: "Home", icon: <HomeIcon /> },
  { label: "Tools", icon: <LibraryIcon />, active: true },
  { label: "AI Chat", icon: <ChatIcon /> },
  { label: "Image\nGenerator", icon: <MdOutlineBrush size={24} /> },
  { label: "Firefox\nExtension", icon: <Firefox size={24} id="navfx" /> },
];

const AppNav = () => (
  <SideNav>
    {navItems.map((n) => (
      <NavItem key={n.label}>
        <NavPill $active={n.active}>{n.icon}</NavPill>
        <NavLabel $active={n.active}>{n.label}</NavLabel>
      </NavItem>
    ))}
  </SideNav>
);

const documentText = [
  "Comparison of Random Forest  and  LSTM Methods for Predicting Google Class C",
  "Stock Prices Muhamad Fahraz Firdaus 1 , a ) ,  Malik Pajar Anugrah 2 , b ) ,  Najla",
  "Ghaida  Fauziyah 3 , c )  ,  Sri Wahyunil Khotimah 4 , d )   1)   Fakultas Teknik",
  "Komputer dan Desain , Nusa Putra University Sukabumi   43152 , Indonesia e-mail:",
  "muhamad.fahraz_ti22@nusaputra.ac.id 1 )   ,  malik.pajar_ti22@nusaputra.ac.id 2 )",
].join("\n");

const EditorPanel = () => (
  <Editor>
    <EditorScroll>
      <TitleRow>
        <BackIcon>
          <MdArrowBack size={22} />
        </BackIcon>
        <Title>Check Plagiarism</Title>
      </TitleRow>
      <RatingCard>
        <RatingHead>
          <MdClose size={24} />
          <RatingTitle>How would you rate this tool?</RatingTitle>
        </RatingHead>
        <Stars>
          {[1, 2, 3, 4, 5].map((n) => (
            <MdStarOutline key={n} size={40} />
          ))}
        </Stars>
      </RatingCard>
      <LimitBar>
        <LimitLabel>Monthly limit</LimitLabel>
        <LimitValue>9476/20000 words</LimitValue>
        <Track />
        <NeedMore>Need More?</NeedMore>
      </LimitBar>
      <OptionCard>
        <OptionText>
          <OptionTitle>Exclude citation quotes, bibliography, and table of contents</OptionTitle>
          <OptionHint>
            ON: These parts won’t be checked
            <br />
            OFF: Everything will be checked.
          </OptionHint>
        </OptionText>
        <Switch>
          <SwitchKnob />
        </Switch>
      </OptionCard>
      <TextCard>{documentText}</TextCard>
    </EditorScroll>
    <EditorFooter>
      <TextButton>
        <MdClose size={18} />
        <ButtonText>Clear Input</ButtonText>
      </TextButton>
      <GradientButton>
        <DocSearchIcon />
        <ButtonText>Check Plagiarism</ButtonText>
      </GradientButton>
    </EditorFooter>
  </Editor>
);

const ResultsPanel = () => (
  <Results>
    <ScoreCard>
      <ScoreTop>
        <Donut />
        <div>
          <ScoreTitle>
            <ScoreValue>1%</ScoreValue> Plagiarism
          </ScoreTitle>
          <Legend>
            <LegendItem $color="#3c59ac">{"1%\nIdentical"}</LegendItem>
            <LegendItem $color="#a3b4f8">{"0% Minor\nchanges"}</LegendItem>
            <LegendItem $color="#dbe0ff">{"0% Omitted\nwords"}</LegendItem>
          </Legend>
        </div>
      </ScoreTop>
      <ScoreNote>A healthy level of plagiarism. The content will be considered unique</ScoreNote>
    </ScoreCard>
    <ActionRow>
      <PrimaryButton>
        <MdOutlineCleaningServices size={16} />
        <ButtonText>Remove Plagiarism</ButtonText>
      </PrimaryButton>
      <ReportButton>
        <MdContentPaste size={14} />
        <ReportLabel>{"Detailed Report (6\nsources)"}</ReportLabel>
      </ReportButton>
    </ActionRow>
    <Chips>
      <ChipGroup>
        <Chip $w={110}>
          <MdOutlineSmartToy size={18} />
          <ButtonText>Detect AI</ButtonText>
        </Chip>
      </ChipGroup>
      <ChipGroup>
        <Chip $w={174}>
          <MdContentCopy size={18} viewBox="0 -0.500 25 25" />
          <ButtonText>Copy checked text</ButtonText>
        </Chip>
      </ChipGroup>
      <ChipGroup>
        <Chip $w={40}>
          <ThumbIcon />
        </Chip>
        <Chip $w={41}>
          <ThumbIcon down />
        </Chip>
      </ChipGroup>
      <ChipGroup>
        <Chip $w={112}>
          <MdOutlineFileDownload size={18} />
          <ButtonText>Save TXT</ButtonText>
        </Chip>
        <Chip $w={41}>
          <MdArrowDropDown size={18} />
        </Chip>
      </ChipGroup>
    </Chips>
    <HistoryButton>
      <HistoryIcon />
      <ButtonText>Show previous results</ButtonText>
    </HistoryButton>
    <Disclaimer>
      Our plagiarism detection is double-checked by the leading expert in this field, Copyleaks™. There is still small chance other plagiarism detectors could give different results
    </Disclaimer>
  </Results>
);

export default function App() {
  return (
    <>
      <GlobalStyle />
      <Desktop>
        <StatusBar />
        <Body>
          <AppDock />
          <Browser>
            <Tabs />
            <AddressBar />
            <Bookmarks />
            <Page>
              <AppNav />
              <EditorPanel />
              <ResultsPanel />
            </Page>
          </Browser>
        </Body>
      </Desktop>
    </>
  );
}
